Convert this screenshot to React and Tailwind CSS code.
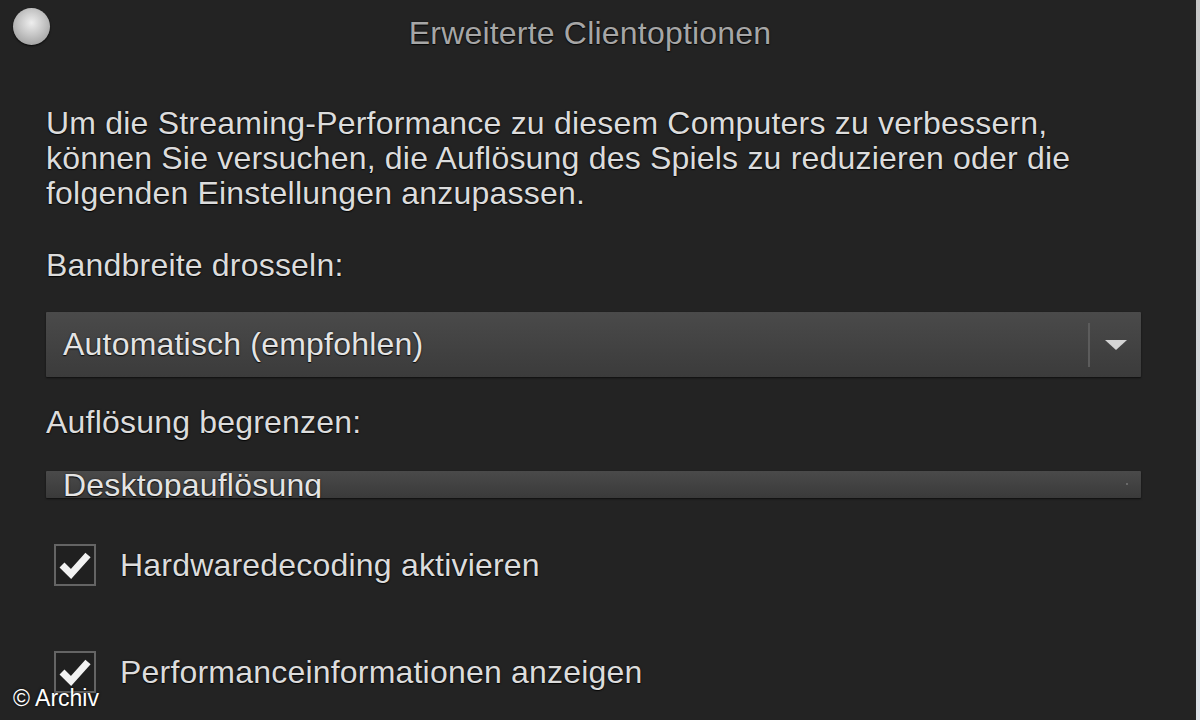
import React from "react";

// Dunkles Dialogfenster "Erweiterte Clientoptionen" (Streaming-Client).
function Dropdown({ label, short }) {
  if (short) {
    return (
      <div className="relative h-[27px] overflow-hidden rounded-[1px] bg-gradient-to-b from-[#4a4a4a] to-[#3a3a3a] shadow-[0_1px_2px_rgba(0,0,0,0.6)]">
        <div className="-mt-[3px] pl-[17px] text-[32px] leading-[35px] tracking-[0.2px] text-[#e4e4e4]">{label}</div>
        <span className="absolute right-[13px] top-[12px] h-[2px] w-[2px] rounded-full bg-[#777]" />
      </div>
    );
  }
  return (
    <div className="flex h-[65px] items-center rounded-[1px] bg-gradient-to-b from-[#4a4a4a] to-[#3b3b3b] shadow-[0_1px_2px_rgba(0,0,0,0.6)]">
      <div className="flex-1 pl-[17px] text-[32px] leading-[35px] tracking-[0.2px] text-[#e4e4e4]">{label}</div>
      <div className="h-[44px] w-[2px] bg-[#5c5c5c]" />
      <div className="flex w-[51px] items-center justify-center">
        <svg width="24" height="12" viewBox="0 0 24 12">
          <path d="M1 1 H23 L12 11 Z" fill="#d4d4d4" />
        </svg>
      </div>
    </div>
  );
}

function Checkbox({ label, className = "" }) {
  return (
    <div className={`flex items-center ${className}`}>
      <div className="ml-[8px] flex h-[42px] w-[42px] shrink-0 items-center justify-center border-2 border-[#646464] bg-[#202020]">
        <svg width="32" height="30" viewBox="0 0 32 30">
          <path d="M3 15 L12 24 L29 5" fill="none" stroke="#f2f2f2" strokeWidth="7" strokeLinejoin="miter" />
        </svg>
      </div>
      <span className="ml-[24px] text-[32px] leading-[35px] tracking-[0.2px] text-[#dcdcdc]">{label}</span>
    </div>
  );
}

export default function App() {
  return (
    <div className="relative flex h-[720px] w-[1200px] overflow-hidden bg-[#232323] font-['Liberation_Sans',Arial,sans-serif] [text-shadow:0_1px_1px_rgba(0,0,0,0.8),0_0_2px_rgba(0,0,0,0.6)]">
      <div className="flex flex-1 flex-col">
        <header className="relative flex h-[66px] items-center justify-center pr-[16px]">
          <span className="absolute left-[13px] top-[8px] h-[37px] w-[37px] rounded-full bg-[radial-gradient(circle_at_50%_40%,#eeeeee_0%,#c4c4c4_45%,#8e8e8e_100%)] shadow-[0_1px_2px_rgba(0,0,0,0.8)]" />
          <h1 className="text-[32px] leading-[35px] tracking-[0.2px] text-[#a6a6a6]">Erweiterte Clientoptionen</h1>
        </header>

        <div className="flex flex-col pl-[46px] pr-[55px] pt-[40px] tracking-[0.2px]">
          <p className="text-[32px] leading-[35px] text-[#dcdcdc]">
            Um die Streaming-Performance zu diesem Computers zu verbessern,
            <br />
            können Sie versuchen, die Auflösung des Spiels zu reduzieren oder die
            <br />
            folgenden Einstellungen anzupassen.
          </p>

          <div className="mt-[37px] text-[32px] leading-[35px] text-[#dcdcdc]">Bandbreite drosseln:</div>
          <div className="mt-[29px]">
            <Dropdown label="Automatisch (empfohlen)" />
          </div>

          <div className="mt-[28px] text-[32px] leading-[35px] text-[#dcdcdc]">Auflösung begrenzen:</div>
          <div className="mt-[31px]">
            <Dropdown label="Desktopauflösung" short />
          </div>

          <Checkbox label="Hardwaredecoding aktivieren" className="mt-[46px]" />
          <Checkbox label="Performanceinformationen anzeigen" className="mt-[65px]" />
        </div>
      </div>

      <div className="w-[4px] shrink-0 bg-gradient-to-b from-[#c9c9c9] to-[#dde3ea]" />

      <span className="absolute bottom-[9px] left-[13px] text-[23px] leading-[26px] text-white [text-shadow:0_0_3px_rgba(0,0,0,0.9)]">
        © Archiv
      </span>
    </div>
  );
}
